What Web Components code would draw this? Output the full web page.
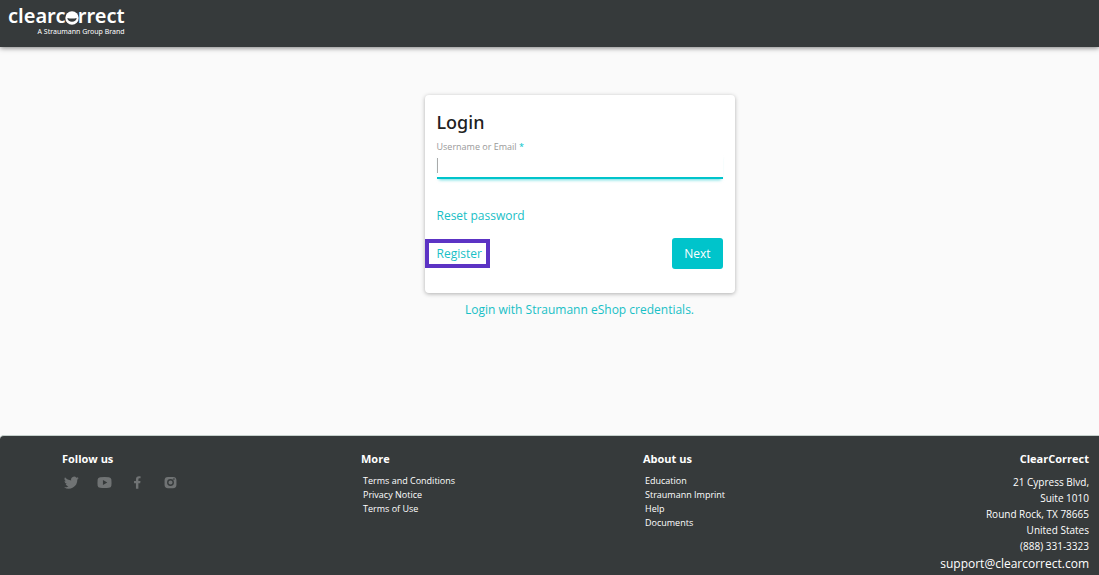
<!DOCTYPE html>
<html lang="en">
<head>
<meta charset="utf-8">
<meta name="viewport" content="width=device-width, initial-scale=1">
<title>ClearCorrect Login</title>
<style>
  body {
    margin: 0;
    background: #fafafa;
    font-family: "Open Sans", "Noto Sans", sans-serif;
    --dark: #363a3b;
    --accent: #00c4cb;
    --link: #18c0c6;
  }
</style>
</head>
<body>
<cc-page>
  <cc-header slot="header"></cc-header>
  <cc-login-card></cc-login-card>
  <cc-footer slot="footer">
    <cc-footer-column heading="Follow us">
      <cc-social></cc-social>
    </cc-footer-column>
    <cc-footer-column heading="More">
      <cc-footer-link href="#terms">Terms and Conditions</cc-footer-link>
      <cc-footer-link href="#privacy">Privacy Notice</cc-footer-link>
      <cc-footer-link href="#use">Terms of Use</cc-footer-link>
    </cc-footer-column>
    <cc-footer-column heading="About us">
      <cc-footer-link href="#education">Education</cc-footer-link>
      <cc-footer-link href="#imprint">Straumann Imprint</cc-footer-link>
      <cc-footer-link href="#help">Help</cc-footer-link>
      <cc-footer-link href="#documents">Documents</cc-footer-link>
    </cc-footer-column>
    <cc-footer-column heading="ClearCorrect" align="end">
      <cc-address></cc-address>
    </cc-footer-column>
  </cc-footer>
</cc-page>

<script>
class CcPage extends HTMLElement {
  connectedCallback() {
    this.attachShadow({mode: 'open'}).innerHTML = `
      <style>
        :host {
          display: flex;
          flex-direction: column;
          min-height: 100vh;
        }

        main {
          flex: 1;
          display: flex;
          justify-content: center;
          align-items: flex-start;
          padding: 48px 16px 24px;
        }
      </style>

      <slot name="header"></slot>
      <main><slot></slot></main>
      <slot name="footer"></slot>
      `
  }
}

class CcHeader extends HTMLElement {
  connectedCallback() {
    this.attachShadow({mode: 'open'}).innerHTML = `
      <style>
        :host {
          display: block;
        }

        header {
          display: flex;
          box-sizing: border-box;
          min-height: 47px;
          padding: 5px 8px;
          background: var(--dark);
          box-shadow: 0 1px 5px rgba(0, 0, 0, .5);
        }

        a {
          display: flex;
          flex-direction: column;
          align-items: flex-end;
          color: #fff;
          text-decoration: none;
        }

        .name {
          font: 600 20px/22px "Noto Sans", sans-serif;
        }

        .tag {
          font: 7px/10px "Noto Sans", sans-serif;
        }

        .smile {
          position: relative;
        }

        /* the "o" of the wordmark is a filled disc with an open mouth */
        .smile svg {
          position: absolute;
          left: 50%;
          bottom: 4px;
          width: 14px;
          height: 14px;
          margin-left: -7px;
        }
      </style>

      <header>
        <a href="#home">
          <span class="name">clearc<span class="smile">o<svg viewBox="0 0 14 14" aria-hidden="true">
            <circle cx="7" cy="7" r="6.700" fill="#fff"/>
            <path d="M2.300 7 Q7 8.200 11.700 7 A4.800 4.800 0 0 1 2.300 7Z" fill="#363a3b"/>
          </svg></span>rrect</span>
          <span class="tag">A Straumann Group Brand</span>
        </a>
      </header>
      `
  }
}

class CcLoginCard extends HTMLElement {
  connectedCallback() {
    this.attachShadow({mode: 'open'}).innerHTML = `
      <style>
        :host {
          display: block;
          width: 100%;
          max-width: 310px;
          margin-left: 60px;
        }

        form {
          padding: 16px 12px 24px;
          background: #fff;
          border-radius: 4px;
          box-shadow: 0 1px 4px rgba(0, 0, 0, .3);
        }

        h1 {
          margin: 0;
          color: #212121;
          font: 500 18px/22px "Noto Sans", sans-serif;
        }

        label {
          display: block;
          margin-top: 8px;
          color: #999;
          font-size: 9px;
          line-height: 12px;
        }

        label span {
          color: var(--accent);
        }

        input {
          display: block;
          box-sizing: border-box;
          width: 100%;
          height: 26px;
          padding: 4px 2px;
          border: 0;
          border-bottom: 2px solid var(--accent);
          outline: 0;
          background: linear-gradient(#aaa, #aaa) 0 5px / 1px 15px no-repeat;
          box-shadow: 0 3px 3px -2px rgba(0, 196, 203, .6);
          font: 12px "Open Sans", sans-serif;
          caret-color: transparent;
        }

        a {
          color: var(--link);
          font-size: 12px;
          line-height: 18px;
          text-decoration: none;
        }

        .reset {
          display: block;
          margin-top: 28px;
        }

        .actions {
          display: flex;
          justify-content: space-between;
          align-items: center;
          margin-top: 13px;
        }

        .register {
          margin-left: -12px;
          padding: 2px 4px 1px 8px;
          border: 4px solid #5c33c4;
        }

        button {
          height: 31px;
          padding: 0 12px;
          border: 0;
          border-radius: 3px;
          background: var(--accent);
          color: #fff;
          font: 500 12px/18px "Open Sans", sans-serif;
        }

        .eshop {
          display: block;
          margin-top: 8px;
          text-align: center;
        }
      </style>

      <form>
        <h1>Login</h1>
        <label for="user">Username or Email <span>*</span></label>
        <input id="user" type="text" required autocomplete="username">
        <a class="reset" href="#reset">Reset password</a>
        <div class="actions">
          <a class="register" href="#register">Register</a>
          <button type="submit">Next</button>
        </div>
      </form>
      <a class="eshop" href="#eshop">Login with Straumann eShop credentials.</a>
      `
  }
}

class CcFooter extends HTMLElement {
  connectedCallback() {
    this.attachShadow({mode: 'open'}).innerHTML = `
      <style>
        :host {
          display: block;
        }

        footer {
          display: grid;
          grid-template-columns: 299fr 282fr 223fr 223fr;
          padding: 14px 10px 1px 62px;
          border-top: 1px solid #c5d0cc;
          border-top-left-radius: 4px;
          background: var(--dark);
          color: #fff;
        }
      </style>

      <footer><slot></slot></footer>
      `
  }
}

class CcFooterColumn extends HTMLElement {
  connectedCallback() {
    this.attachShadow({mode: 'open'}).innerHTML = `
      <style>
        :host {
          display: block;
        }

        :host([align="end"]) {
          text-align: right;
        }

        h2 {
          margin: 0 0 6px;
          font-size: 11px;
          font-weight: 700;
          line-height: 18px;
        }
      </style>

      <h2>${this.getAttribute('heading')}</h2>
      <slot></slot>
      `
  }
}

class CcFooterLink extends HTMLElement {
  connectedCallback() {
    this.attachShadow({mode: 'open'}).innerHTML = `
      <style>
        :host {
          display: block;
          padding-left: 2px;
          font-size: 9px;
          line-height: 14px;
        }

        a {
          color: #fff;
          text-decoration: none;
        }
      </style>

      <a href="${this.getAttribute('href')}"><slot></slot></a>
      `
  }
}

class CcSocial extends HTMLElement {
  connectedCallback() {
    this.attachShadow({mode: 'open'}).innerHTML = `
      <style>
        :host {
          display: flex;
          gap: 18px;
          padding: 1px 2px;
        }

        a {
          display: flex;
          color: #707374;
        }

        svg {
          width: 15px;
          height: 15px;
          fill: currentColor;
        }
      </style>

      <a href="#twitter" aria-label="Twitter"><svg viewBox="0 0 24 24">
        <path d="M23.600 4.900c-.9.4-1.800.6-2.800.8 1-.6 1.800-1.600 2.100-2.700-.9.6-2 1-3.100 1.200a4.800 4.800 0 0 0-8.300 4.400C7.500 8.400 4 6.500 1.600 3.600a4.800 4.800 0 0 0 1.500 6.500c-.8 0-1.500-.2-2.200-.6v.1c0 2.300 1.700 4.300 3.900 4.700-.7.2-1.500.2-2.200.1.600 1.900 2.400 3.300 4.500 3.400A9.700 9.700 0 0 1 0 19.700 13.700 13.700 0 0 0 21.200 7.400c1-.7 1.800-1.500 2.400-2.500z"/>
      </svg></a>
      <a href="#youtube" aria-label="YouTube"><svg viewBox="0 0 24 24">
        <path fill-rule="evenodd" d="M5 3.500Q12 2.700 19 3.500Q22.500 3.800 23 7Q23.500 12 23 17Q22.500 20.200 19 20.500Q12 21.300 5 20.500Q1.500 20.200 1 17Q.5 12 1 7Q1.500 3.800 5 3.500zM9.500 8v8l7-4z"/>
      </svg></a>
      <a href="#facebook" aria-label="Facebook"><svg viewBox="0 0 24 24">
        <path d="M9.500 22v-9H6.500V9.500h3V7c0-3.300 1.900-5 4.800-5 1.300 0 2.600.2 2.600.2v3h-1.500c-1.500 0-2 .9-2 1.800v2.500h3.400l-.5 3.500h-2.900v9z"/>
      </svg></a>
      <a href="#instagram" aria-label="Instagram"><svg viewBox="0 0 24 24">
        <path fill-rule="evenodd" d="M8 3h8a5.500 5.500 0 0 1 5.500 5.500v7A5.500 5.500 0 0 1 16 21H8a5.500 5.500 0 0 1-5.500-5.500v-7A5.500 5.500 0 0 1 8 3zM12 6.500a5.500 5.500 0 1 0 0 11 5.500 5.500 0 0 0 0-11zM12 8.700a3.300 3.300 0 1 1 0 6.600 3.300 3.300 0 0 1 0-6.600zM17.500 5.200a1.300 1.300 0 1 0 0 2.600 1.300 1.300 0 0 0 0-2.600z"/>
      </svg></a>
      `
  }
}

class CcAddress extends HTMLElement {
  connectedCallback() {
    this.attachShadow({mode: 'open'}).innerHTML = `
      <style>
        :host {
          display: block;
        }

        address {
          font-size: 10px;
          font-style: normal;
          font-weight: 500;
          line-height: 16px;
        }

        a {
          color: #fff;
          font-size: 12px;
          font-weight: 400;
          line-height: 20px;
          text-decoration: none;
        }
      </style>

      <address>
        <div>21 Cypress Blvd,</div>
        <div>Suite 1010</div>
        <div>Round Rock, TX 78665</div>
        <div>United States</div>
        <div>(888) 331-3323</div>
        <a href="mailto:support@clearcorrect.com">support@clearcorrect.com</a>
      </address>
      `
  }
}

customElements.define('cc-page', CcPage);
customElements.define('cc-header', CcHeader);
customElements.define('cc-login-card', CcLoginCard);
customElements.define('cc-footer', CcFooter);
customElements.define('cc-footer-column', CcFooterColumn);
customElements.define('cc-footer-link', CcFooterLink);
customElements.define('cc-social', CcSocial);
customElements.define('cc-address', CcAddress);
</script>
</body>
</html>
